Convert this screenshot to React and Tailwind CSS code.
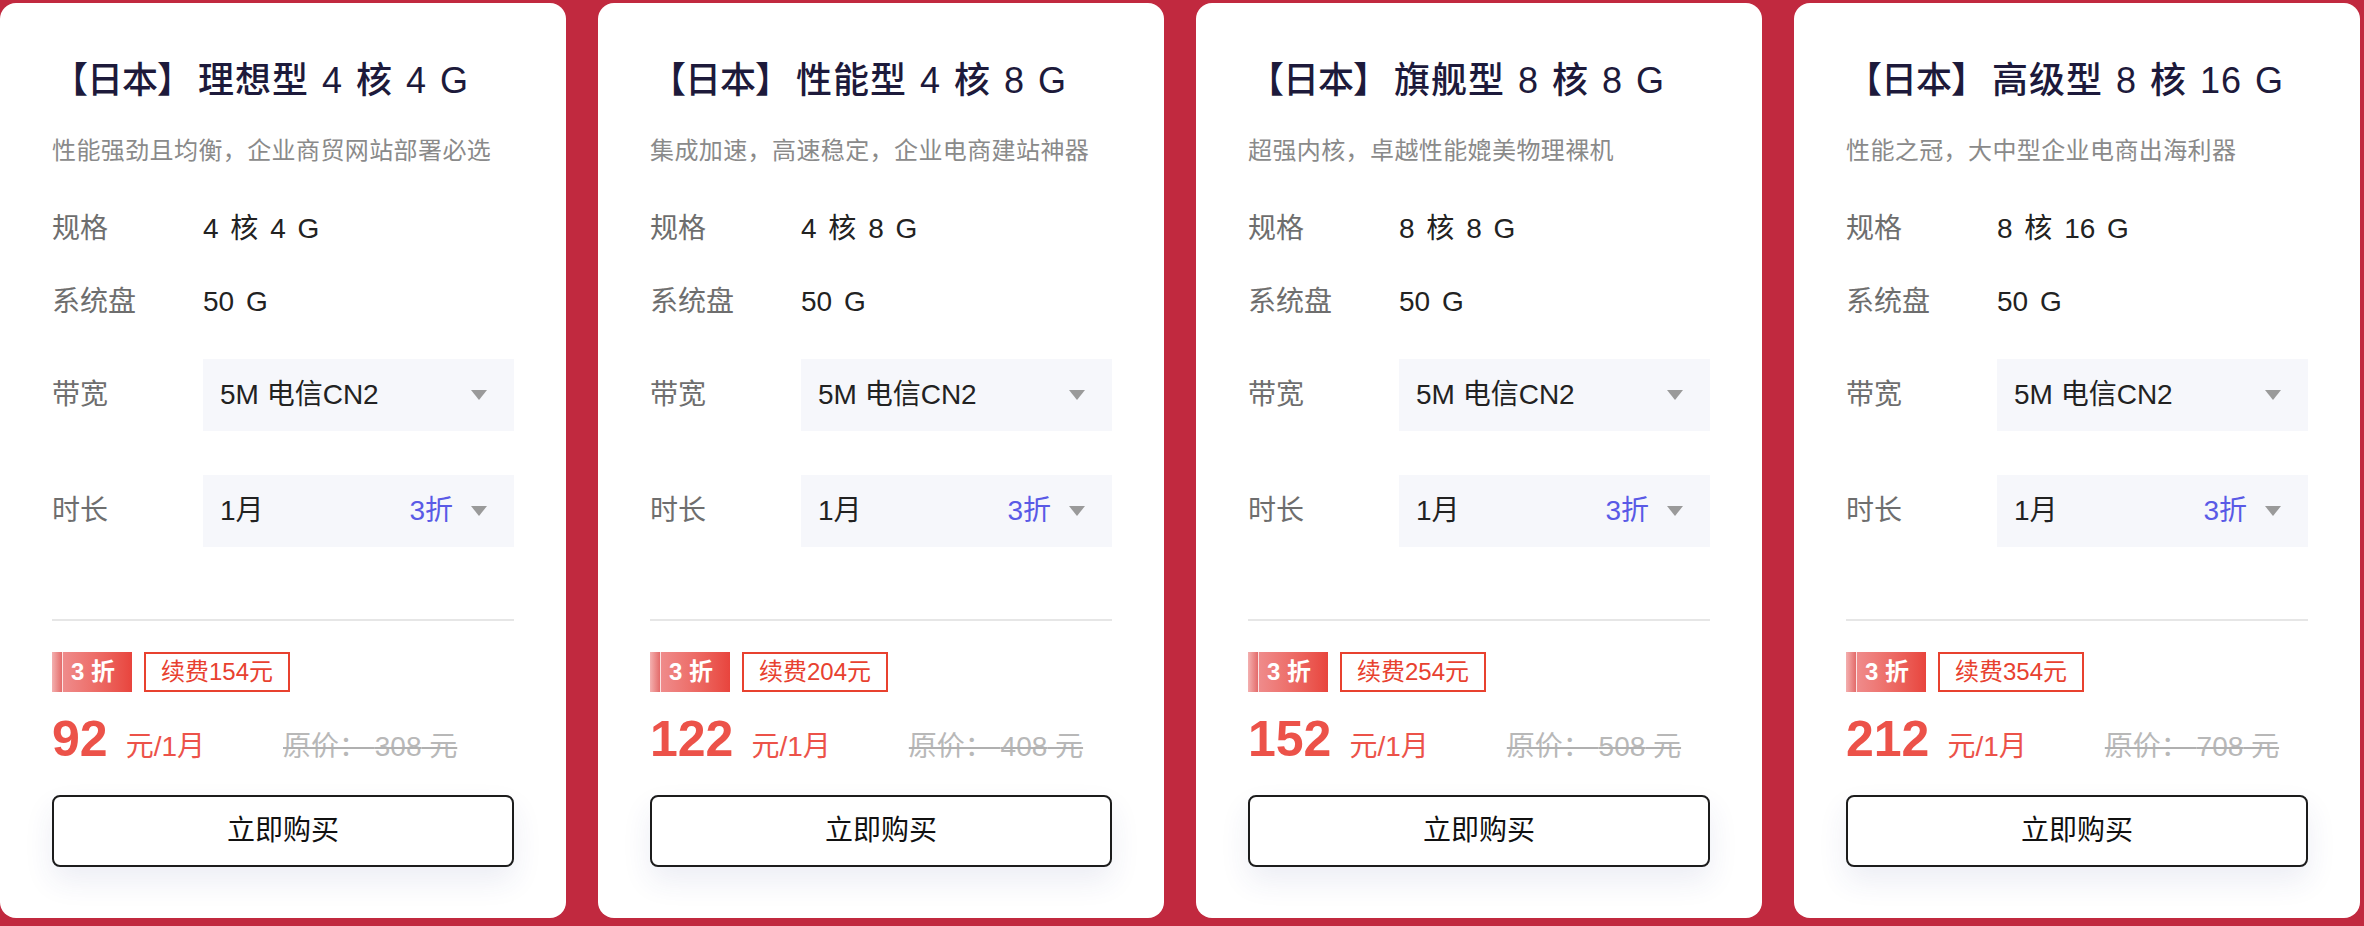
import React from "react";

const plans = [
  { name: "理想型", spec: "4 核 4 G", desc: "性能强劲且均衡，企业商贸网站部署必选", price: 92, renew: 154, orig: 308 },
  { name: "性能型", spec: "4 核 8 G", desc: "集成加速，高速稳定，企业电商建站神器", price: 122, renew: 204, orig: 408 },
  { name: "旗舰型", spec: "8 核 8 G", desc: "超强内核，卓越性能媲美物理裸机", price: 152, renew: 254, orig: 508 },
  { name: "高级型", spec: "8 核 16 G", desc: "性能之冠，大中型企业电商出海利器", price: 212, renew: 354, orig: 708 },
];

const Caret = () => (
  <svg width="16" height="10" viewBox="0 0 16 10" className="shrink-0">
    <polygon points="0,0 16,0 8,10" fill="#9a9a9a" />
  </svg>
);

const Row = ({ label, children }) => (
  <div className="flex items-center">
    <span className="w-[151px] shrink-0 text-[28px] leading-[36px] text-[#6e6e6e]">{label}</span>
    {children}
  </div>
);

const PlanCard = ({ plan }) => (
  <div className="flex h-[915px] w-[566px] shrink-0 flex-col rounded-[16px] bg-white px-[52px] pt-[55px]">
    {/* Title */}
    <h3 className="whitespace-nowrap text-[36px] font-medium leading-[46px] tracking-[1px] text-[#1d1a3b]">
      <span className="tracking-[-1px]">【日本】</span>
      <span className="ml-[6px] [word-spacing:2px]">{plan.name} {plan.spec}</span>
    </h3>
    <p className="mt-[31px] whitespace-nowrap text-[24px] leading-[32px] tracking-[0.4px] text-[#8a8a8a]">{plan.desc}</p>

    {/* Specs */}
    <div className="mt-[44px]">
      <Row label="规格">
        <span className="text-[28px] leading-[36px] text-[#222] [word-spacing:4px]">{plan.spec}</span>
      </Row>
    </div>
    <div className="mt-[37px]">
      <Row label="系统盘">
        <span className="text-[28px] leading-[36px] text-[#222] [word-spacing:4px]">50 G</span>
      </Row>
    </div>
    <div className="mt-[39px]">
      <Row label="带宽">
        <div className="flex h-[72px] flex-1 items-center justify-between bg-[#f6f7fb] pl-[17px] pr-[27px]">
          <span className="text-[28px] text-[#222]">5M 电信CN2</span>
          <Caret />
        </div>
      </Row>
    </div>
    <div className="mt-[44px]">
      <Row label="时长">
        <div className="flex h-[72px] flex-1 items-center bg-[#f6f7fb] pl-[17px] pr-[27px]">
          <span className="flex-1 text-[28px] text-[#222]">1月</span>
          <span className="mr-[18px] text-[28px] text-[#5a5ae6]">3折</span>
          <Caret />
        </div>
      </Row>
    </div>

    <div className="mt-[72px] h-[2px] bg-[#e6e6e6]" />

    {/* Discount tags */}
    <div className="mt-[31px] flex h-[40px] items-stretch gap-[12px]">
      <div className="flex w-[80px] items-stretch">
        <div className="w-[10px] bg-gradient-to-r from-[#f3b0b0] to-[#e36a6a]" />
        <div className="w-[1px] bg-[#fbe3e3]" />
        <div className="flex flex-1 items-center bg-gradient-to-r from-[#ef8b8b] to-[#e8443d] pl-[8px] text-[24px] font-bold text-white">
          3 折
        </div>
      </div>
      <div className="flex items-center border-2 border-[#e8412f] px-[15px] text-[24px] text-[#e8412f]">
        续费{plan.renew}元
      </div>
    </div>

    {/* Price */}
    <div className="mt-[22px] flex items-baseline whitespace-nowrap">
      <span className="text-[50px] font-bold leading-[50px] text-[#ec5249]">{plan.price}</span>
      <span className="ml-[18px] text-[28px] text-[#ec5249]">元/1月</span>
      <span className="ml-[78px] text-[28px] text-[#b8b8b8] line-through decoration-[#b0b0b0] decoration-2">
        原价： {plan.orig} 元
      </span>
    </div>

    {/* Buy */}
    <button className="mt-[27px] flex h-[72px] w-full items-center justify-center rounded-[8px] border-2 border-[#1c1c1c] bg-white text-[28px] text-[#111] shadow-[0_14px_30px_rgba(40,60,130,0.09)]">
      立即购买
    </button>
  </div>
);

export default function App() {
  return (
    <div className="flex h-[926px] w-full gap-[32px] overflow-hidden bg-[#c1293f] pt-[3px] font-['Liberation_Sans','Noto_Sans_CJK_SC',sans-serif]">
      {plans.map((p) => (
        <PlanCard key={p.name} plan={p} />
      ))}
    </div>
  );
}
